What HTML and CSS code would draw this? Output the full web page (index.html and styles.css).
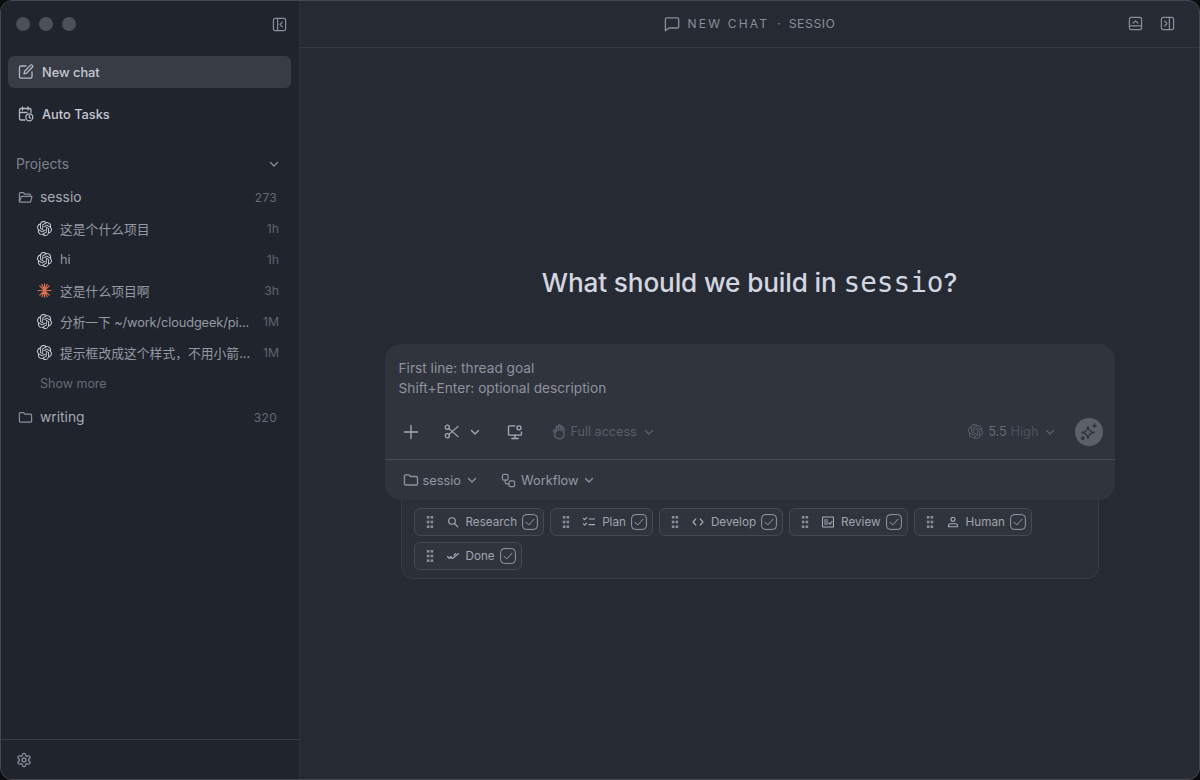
FILE: index.html
```html
<!DOCTYPE html>
<html lang="en">
<head>
<meta charset="utf-8">
<title>New chat · sessio</title>
<link rel="stylesheet" href="styles.css">
</head>
<body>
<svg class="defs" width="0" height="0" aria-hidden="true">
  <symbol id="oai" viewBox="0 0 24 24"><path fill="currentColor" stroke="none" d="M22.2819 9.8211a5.9847 5.9847 0 0 0-.5157-4.9108 6.0462 6.0462 0 0 0-6.5098-2.9A6.0651 6.0651 0 0 0 4.9807 4.1818a5.9847 5.9847 0 0 0-3.9977 2.9 6.0462 6.0462 0 0 0 .7427 7.0966 5.98 5.98 0 0 0 .511 4.9107 6.051 6.051 0 0 0 6.5146 2.9001A5.9847 5.9847 0 0 0 13.2599 24a6.0557 6.0557 0 0 0 5.7718-4.2058 5.9894 5.9894 0 0 0 3.9977-2.9001 6.0557 6.0557 0 0 0-.7475-7.0729zm-9.022 12.6081a4.4755 4.4755 0 0 1-2.8764-1.0408l.1419-.0804 4.7783-2.7582a.7948.7948 0 0 0 .3927-.6813v-6.7369l2.02 1.1686a.071.071 0 0 1 .038.052v5.5826a4.504 4.504 0 0 1-4.4945 4.4944zm-9.6607-4.1254a4.4708 4.4708 0 0 1-.5346-3.0137l.142.0852 4.783 2.7582a.7712.7712 0 0 0 .7806 0l5.8428-3.3685v2.3324a.0804.0804 0 0 1-.0332.0615L9.74 19.9502a4.4992 4.4992 0 0 1-6.1408-1.6464zM2.3408 7.8956a4.485 4.485 0 0 1 2.3655-1.9728V11.6a.7664.7664 0 0 0 .3879.6765l5.8144 3.3543-2.0201 1.1685a.0757.0757 0 0 1-.071 0l-4.8303-2.7865A4.504 4.504 0 0 1 2.3408 7.872zm16.5963 3.8558L13.1038 8.364 15.1192 7.2a.0757.0757 0 0 1 .071 0l4.8303 2.7913a4.4944 4.4944 0 0 1-.6765 8.1042v-5.6772a.79.79 0 0 0-.407-.667zm2.0107-3.0231l-.142-.0852-4.7735-2.7818a.7759.7759 0 0 0-.7854 0L9.409 9.2297V6.8974a.0662.0662 0 0 1 .0284-.0615l4.8303-2.7866a4.4992 4.4992 0 0 1 6.6802 4.66zM8.3065 12.863l-2.02-1.1638a.0804.0804 0 0 1-.038-.0567V6.0742a4.4992 4.4992 0 0 1 7.3757-3.4537l-.142.0805L8.704 5.459a.7948.7948 0 0 0-.3927.6813zm1.0976-2.3654l2.602-1.4998 2.6069 1.4998v2.9994l-2.5974 1.4997-2.6067-1.4997Z"/></symbol>
  <symbol id="chev" viewBox="0 0 10 10"><path d="M1.5 3.5 5 7l3.5-3.5"/></symbol>
  <symbol id="grip" viewBox="0 0 8 14"><g class="dots"><rect x=".8" y="1" width="2.6" height="2.6"/><rect x="4.6" y="1" width="2.6" height="2.6"/><rect x=".8" y="5.700" width="2.6" height="2.6"/><rect x="4.6" y="5.700" width="2.6" height="2.6"/><rect x=".8" y="10.400" width="2.6" height="2.6"/><rect x="4.6" y="10.400" width="2.6" height="2.6"/></g></symbol>
  <symbol id="box" viewBox="0 0 16 16"><rect x=".6" y=".6" width="14.8" height="14.8" rx="3.6"/><path d="m4 8.2 2.8 2.8L12 5.2"/></symbol>
  <symbol id="folder" viewBox="0 0 16 16"><path d="M1.5 12V3.8c0-.6.5-1 1-1h3.4l1.7 1.7h5.9c.6 0 1 .5 1 1V12c0 .6-.5 1-1 1H2.5c-.6 0-1-.5-1-1Z"/></symbol>
</svg>

<div class="window">
  <aside class="sidebar">
    <div class="titlebar">
      <div class="lights"><span class="light"></span><span class="light"></span><span class="light"></span></div>
      <svg class="ic ic-15 muted" viewBox="0 0 16 16"><rect x="1.5" y="1.5" width="13" height="13" rx="1.8"/><path d="M6 1.5v13"/><path d="M11 5.5 8.6 8l2.4 2.5"/></svg>
    </div>
    <nav class="nav">
      <a class="nav-item active">
        <svg class="ic ic-16" viewBox="0 0 16 16"><path d="M8 2H3a1.5 1.5 0 0 0-1.5 1.5v9.200A1.500 1.500 0 0 0 3 14.200h9.500a1.500 1.500 0 0 0 1.500-1.500V8"/><path d="M12.300 1.400a1.300 1.300 0 0 1 2 1.900L8.500 9.200 6 9.800l.6-2.500Z"/></svg>
        <span>New chat</span>
      </a>
      <a class="nav-item">
        <svg class="ic ic-16" viewBox="0 0 16 16"><path d="M7 14H3a1.500 1.500 0 0 1-1.500-1.500V4A1.500 1.500 0 0 1 3 2.500h8.500A1.500 1.500 0 0 1 13 4v2.500"/><path d="M4.500 1v3M10 1v3M1.500 6.500H9"/><circle cx="11.300" cy="11.300" r="3.500"/><path d="M11.300 9.500v1.900l1.200.8"/></svg>
        <span>Auto Tasks</span>
      </a>
    </nav>
    <div class="section-head">
      <span>Projects</span>
      <svg class="ic ic-10 chev-dim"><use href="#chev"/></svg>
    </div>
    <div class="project">
      <svg class="ic ic-15 muted" viewBox="0 0 16 16"><path d="M1.500 12.500V3.800c0-.6.5-1 1-1h3.300l1.600 1.700h5c.6 0 1 .5 1 1v1.200"/><path d="M1.500 12.500 3.200 7.600c.1-.5.5-.9 1-.9h9.600c.7 0 1.100.6.900 1.200l-1.200 4.300c-.1.500-.5.800-1 .8H2.500c-.5 0-1-.5-1-.5Z"/></svg>
      <span class="project-name">sessio</span>
      <span class="count">273</span>
    </div>
    <ul class="threads">
      <li class="thread"><svg class="logo ic-15"><use href="#oai"/></svg><span class="thread-title">这是个什么项目</span><span class="age">1h</span></li>
      <li class="thread"><svg class="logo ic-15"><use href="#oai"/></svg><span class="thread-title">hi</span><span class="age">1h</span></li>
      <li class="thread"><svg class="claude ic-15" viewBox="0 0 16 16"><path d="M8 1v14M1 8h14M3 3l10 10M13 3 3 13M5.300 1.500l5.400 13M10.700 1.500l-5.400 13"/></svg><span class="thread-title">这是什么项目啊</span><span class="age">3h</span></li>
      <li class="thread"><svg class="logo ic-15"><use href="#oai"/></svg><span class="thread-title thread-latin">分析一下 ~/work/cloudgeek/pi...</span><span class="age">1M</span></li>
      <li class="thread"><svg class="logo ic-15"><use href="#oai"/></svg><span class="thread-title">提示框改成这个样式，不用小箭...</span><span class="age">1M</span></li>
    </ul>
    <div class="show-more">Show more</div>
    <div class="project project-2">
      <svg class="ic ic-15 muted"><use href="#folder"/></svg>
      <span class="project-name">writing</span>
      <span class="count">320</span>
    </div>
    <footer class="side-foot">
      <svg class="ic ic-16 muted gear" viewBox="0 0 24 24"><path d="M12.22 2h-.44a2 2 0 0 0-2 2v.18a2 2 0 0 1-1 1.73l-.43.25a2 2 0 0 1-2 0l-.15-.08a2 2 0 0 0-2.73.73l-.22.38a2 2 0 0 0 .73 2.73l.15.1a2 2 0 0 1 1 1.72v.51a2 2 0 0 1-1 1.74l-.15.09a2 2 0 0 0-.73 2.73l.22.38a2 2 0 0 0 2.73.73l.15-.08a2 2 0 0 1 2 0l.43.25a2 2 0 0 1 1 1.73V20a2 2 0 0 0 2 2h.44a2 2 0 0 0 2-2v-.18a2 2 0 0 1 1-1.73l.43-.25a2 2 0 0 1 2 0l.15.08a2 2 0 0 0 2.73-.73l.22-.39a2 2 0 0 0-.73-2.73l-.15-.08a2 2 0 0 1-1-1.74v-.5a2 2 0 0 1 1-1.74l.15-.09a2 2 0 0 0 .73-2.73l-.22-.38a2 2 0 0 0-2.73-.73l-.15.08a2 2 0 0 1-2 0l-.43-.25a2 2 0 0 1-1-1.73V4a2 2 0 0 0-2-2z"/><circle cx="12" cy="12" r="3"/></svg>
    </footer>
  </aside>

  <main class="main">
    <header class="topbar">
      <div class="crumb">
        <svg class="ic ic-16 crumb-ic" viewBox="0 0 16 16"><path d="M2.500 1.800h11a1.200 1.200 0 0 1 1.200 1.200v7.800a1.200 1.200 0 0 1-1.200 1.200H5L1.400 14.800V3a1.200 1.200 0 0 1 1.100-1.200Z"/></svg>
        <span class="crumb-a">NEW CHAT</span><span class="crumb-dot">·</span><span class="crumb-b">SESSIO</span>
      </div>
      <div class="top-actions">
        <svg class="ic ic-15 muted" viewBox="0 0 16 16"><rect x="1.500" y="1.500" width="13" height="13" rx="1.800"/><path d="M1.500 10.500h13"/><path d="M5.500 7.500 8 5.200l2.500 2.300"/></svg>
        <svg class="ic ic-15 muted" viewBox="0 0 16 16"><rect x="1.500" y="1.500" width="13" height="13" rx="1.800"/><path d="M10 1.500v13"/><path d="M5 5.500 7.400 8 5 10.500"/></svg>
      </div>
    </header>

    <section class="stage">
      <h1 class="headline">What should we build in <code class="mono">sessio</code>?</h1>
      <div class="composer">
        <div class="prompt">First line: thread goal<br>Shift+Enter: optional description</div>
        <div class="tools">
          <svg class="ic ic-16 tool-ic plus" viewBox="0 0 16 16"><path d="M8 1.500v13M1.500 8h13"/></svg>
          <svg class="ic ic-15 tool-ic scissors" viewBox="0 0 16 16"><circle cx="3.500" cy="3.500" r="2.200"/><circle cx="3.500" cy="12.500" r="2.200"/><path d="M5.200 4.900 15 13.500M5.200 11.100 15 2.500"/></svg>
          <svg class="ic ic-10 tool-ic scissors-chev"><use href="#chev"/></svg>
          <svg class="ic ic-16 tool-ic monitor" viewBox="0 0 16 16"><path d="M8 1.800H2.500a1 1 0 0 0-1 1v7.400a1 1 0 0 0 1 1h11a1 1 0 0 0 1-1V8"/><path d="M8 11.200v3M4.800 14.500h6.400"/><circle cx="12" cy="3.800" r="2" class="solid"/></svg>
          <svg class="ic dim hand" viewBox="0 0 16 16"><path d="M4 9.500 2.600 8c-.8-.9.5-2 1.400-1.100L5 8V4c0-1.200 1.800-1.200 1.800 0v3V2.800c0-1.200 1.800-1.200 1.800 0V7V3.500c0-1.200 1.800-1.200 1.800 0v4V5c0-1.200 1.800-1.200 1.800 0v5.500c0 2.800-2 4.300-4.500 4.300-2.300 0-3.400-1-4.400-2.800Z"/></svg>
          <span class="dim-label access">Full access</span>
          <svg class="ic ic-10 dim access-chev"><use href="#chev"/></svg>
          <span class="spacer"></span>
          <svg class="logo ic-15 dim-logo"><use href="#oai"/></svg>
          <span class="dim-label model"><span class="model-a">5.5</span> <span class="model-b">High</span></span>
          <svg class="ic ic-10 dim model-chev"><use href="#chev"/></svg>
          <span class="send">
            <svg class="ic send-ic" viewBox="0 0 18 18"><path d="M8 3.500c.6 3.500 2.500 5.400 6 6-3.500.6-5.400 2.500-6 6-.6-3.500-2.500-5.400-6-6 3.500-.6 5.400-2.500 6-6Z"/><path d="M14.500 1v3.400M12.800 2.700h3.400"/><circle cx="2.800" cy="15.200" r="1.200"/></svg>
          </span>
        </div>
        <div class="context">
          <svg class="ic ic-16 ctx-ic"><use href="#folder"/></svg>
          <span class="ctx-label">sessio</span>
          <svg class="ic ic-10 ctx-ic ctx-chev"><use href="#chev"/></svg>
          <svg class="ic ic-15 ctx-ic flow-ic" viewBox="0 0 16 16"><rect x="1.500" y="1.500" width="6" height="6" rx="1.500"/><rect x="8.500" y="8.500" width="6" height="6" rx="1.500"/><path d="M4.500 7.500v2.500c0 1 .7 1.500 1.500 1.500h2.500"/></svg>
          <span class="ctx-label">Workflow</span>
          <svg class="ic ic-10 ctx-ic ctx-chev"><use href="#chev"/></svg>
        </div>
      </div>
      <div class="workflow">
        <div class="chip"><svg class="grip"><use href="#grip"/></svg><svg class="ic chip-ic" viewBox="0 0 12 12"><circle cx="5" cy="5" r="3.300"/><path d="m7.500 7.500 3.300 3.300"/></svg><span class="chip-label">Research</span><svg class="ic chip-box"><use href="#box"/></svg></div>
        <div class="chip"><svg class="grip"><use href="#grip"/></svg><svg class="ic chip-ic" viewBox="0 0 12 12"><path d="m.5 2.500 1.200 1.200L3.600 1.600M.5 8l1.200 1.200 1.900-2.100M6 3h5.800M6 8.600h5.800"/></svg><span class="chip-label">Plan</span><svg class="ic chip-box"><use href="#box"/></svg></div>
        <div class="chip"><svg class="grip"><use href="#grip"/></svg><svg class="ic chip-ic" viewBox="0 0 12 12"><path d="M3.800 3 1 6l2.800 3M8.200 3 11 6 8.200 9"/></svg><span class="chip-label">Develop</span><svg class="ic chip-box"><use href="#box"/></svg></div>
        <div class="chip"><svg class="grip"><use href="#grip"/></svg><svg class="ic chip-ic" viewBox="0 0 12 12"><rect x=".5" y="1" width="11" height="10" rx=".8"/><path d="M2.500 4h3M2.500 6h3M2.500 8h3M6.800 7l1.200 1.200 2-2.700"/></svg><span class="chip-label">Review</span><svg class="ic chip-box"><use href="#box"/></svg></div>
        <div class="chip"><svg class="grip"><use href="#grip"/></svg><svg class="ic chip-ic" viewBox="0 0 12 12"><circle cx="6" cy="3.300" r="2"/><path d="M1.500 10.800V9.800c0-1.200 1-2 2-2h5c1 0 2 .8 2 2v1Z"/></svg><span class="chip-label">Human</span><svg class="ic chip-box"><use href="#box"/></svg></div>
        <div class="chip"><svg class="grip"><use href="#grip"/></svg><svg class="ic chip-ic" viewBox="0 0 12 12"><path d="M.5 6.500 2.500 8.500 4 7M3.500 6.500l2 2L11.500 3.500M7 5l1.500-1.300"/></svg><span class="chip-label">Done</span><svg class="ic chip-box"><use href="#box"/></svg></div>
      </div>
    </section>
  </main>
</div>
</body>
</html>
```

FILE: styles.css
```css
* { box-sizing: border-box; }

html, body {
  margin: 0;
  height: 100%;
  background: #0c0d10;
}

body {
  font-family: Inter, "Noto Sans CJK SC", "Liberation Sans", sans-serif;
  overflow: hidden;
}

.defs { position: absolute; }

.window {
  width: 1200px;
  height: 780px;
  display: flex;
  border: 1px solid #44474e;
  border-radius: 12px;
  overflow: hidden;
  background: #262a33;
}

.ic {
  fill: none;
  stroke: currentColor;
  stroke-width: 1.3;
  stroke-linecap: round;
  stroke-linejoin: round;
  flex: none;
}

.ic-10 { width: 10px; height: 10px; }
.ic-15 { width: 15px; height: 15px; flex: none; }
.ic-16 { width: 16px; height: 16px; }
.muted { color: #8a8e99; }

/* Sidebar */
.sidebar {
  width: 299px;
  flex: none;
  display: flex;
  flex-direction: column;
  background: #20242c;
  border-right: 1px solid #2e323b;
}

.titlebar {
  height: 46px;
  padding: 0 12px 0 15px;
  display: flex;
  align-items: center;
  justify-content: space-between;
}

.lights { display: flex; gap: 9px; }

.light {
  width: 14px;
  height: 14px;
  border-radius: 50%;
  background: #4d5058;
}

.nav {
  margin-top: 9px;
  padding: 0 8px 0 7px;
  display: flex;
  flex-direction: column;
  gap: 10px;
}

.nav-item {
  height: 32px;
  padding: 0 10px;
  display: flex;
  align-items: center;
  gap: 8px;
  border-radius: 6px;
  font-size: 12.800px;
  font-weight: 500;
  color: #c6c9d3;
}

.nav-item .ic { color: #b5b8c2; }
.nav-item.active { background: #383c45; }

.section-head {
  margin-top: 21px;
  height: 26px;
  padding: 0 20px 0 15px;
  display: flex;
  align-items: center;
  justify-content: space-between;
  font-size: 13.800px;
  color: #7e838e;
}

.chev-dim { color: #8a8e99; }

.project {
  margin-top: 7px;
  height: 26px;
  padding: 0 22px 0 17px;
  display: flex;
  align-items: center;
  gap: 7px;
}

.project-2 { margin-top: 6px; }

.project-name {
  flex: 1;
  font-size: 13.800px;
  color: #a8acb7;
}

.count {
  font-size: 12px;
  letter-spacing: .3px;
  color: #666b76;
}

.threads {
  list-style: none;
  margin: 3px 0 0;
  padding: 0;
}

.thread {
  height: 31px;
  padding: 0 20px 0 36px;
  display: flex;
  align-items: center;
  gap: 8px;
}

.logo { color: #d0d3dc; flex: none; }

.claude {
  flex: none;
  fill: none;
  stroke: #d9704e;
  stroke-width: 1.300;
  stroke-linecap: round;
}

.thread-title {
  flex: 1;
  min-width: 0;
  white-space: nowrap;
  overflow: hidden;
  font-size: 12.800px;
  color: #9599a4;
}

.thread-latin { letter-spacing: -.12px; }

.age {
  font-size: 12.300px;
  color: #5f646f;
}

.show-more {
  height: 30px;
  padding-left: 39px;
  display: flex;
  align-items: center;
  font-size: 12.500px;
  color: #666b76;
}

.side-foot {
  margin-top: auto;
  height: 40px;
  padding: 1px 0 0 15px;
  display: flex;
  align-items: center;
  border-top: 1px solid #363a43;
}

.gear { stroke-width: 1.900; }

/* Main */
.main {
  flex: 1;
  min-width: 0;
  display: flex;
  flex-direction: column;
}

.topbar {
  height: 47px;
  flex: none;
  padding-bottom: 1px;
  display: flex;
  align-items: center;
  justify-content: center;
  position: relative;
  border-bottom: 1px solid #353943;
}

.crumb {
  display: flex;
  align-items: center;
  color: #8a8e99;
}

.crumb-ic { margin-right: 8px; }
.crumb-a { font-size: 12px; letter-spacing: 2.200px; }
.crumb-dot { margin: 0 8px; font-size: 12px; }
.crumb-b { font-size: 12.300px; letter-spacing: .5px; }

.top-actions {
  position: absolute;
  right: 24px;
  top: 15px;
  display: flex;
  gap: 17px;
}

.stage {
  flex: 1;
  display: flex;
  flex-direction: column;
  align-items: center;
  padding-top: 217px;
}

.headline {
  margin: 0 0 43px;
  font-size: 26.200px;
  line-height: 36px;
  font-weight: 500;
  letter-spacing: -.15px;
  color: #d3d6e0;
}

.mono {
  font-family: "DejaVu Sans Mono", monospace;
  font-size: 27.700px;
  font-weight: 400;
  letter-spacing: 0;
}

.composer {
  position: relative;
  z-index: 1;
  width: 730px;
  height: 156px;
  display: flex;
  flex-direction: column;
  border-radius: 16px;
  background: #30343d;
}

.prompt {
  padding: 14px 14px 0;
  height: 66px;
  font-size: 13.700px;
  line-height: 20px;
  color: #8e929d;
}

.tools {
  height: 50px;
  padding: 0 12px 6px 18px;
  display: flex;
  align-items: center;
  border-bottom: 1px solid #464a53;
}

.tool-ic { color: #a8acb7; }
.scissors { margin-left: 25px; }
.scissors-chev { margin-left: 11px; }
.monitor { margin-left: 27px; }

.hand {
  width: 17px;
  height: 17px;
  margin-left: 28px;
  margin-right: 3px;
}

.dim { color: #5b5f69; }
.dim-logo { color: #5b5f69; margin-left: 1px; }

.dim-label {
  font-size: 12.800px;
  color: #5b5f69;
}

.access { font-size: 12.600px; }
.access-chev { margin-left: 7px; }
.spacer { flex: 1; }
.model { margin-left: 5px; }
.model-a { color: #666a75; }
.model-b { color: #4e525c; }
.model-chev { margin-left: 6px; margin-right: 20px; }

.send {
  width: 28px;
  height: 28px;
  display: flex;
  align-items: center;
  justify-content: center;
  border-radius: 50%;
  background: #5c6069;
}

.send-ic {
  width: 18px;
  height: 18px;
  color: #2f333b;
  stroke-width: 1.400;
}

.context {
  flex: 1;
  padding: 0 0 0 18px;
  display: flex;
  align-items: center;
}

.ctx-ic { color: #8e929d; }
.ctx-label { margin-left: 4px; font-size: 12.800px; color: #9599a4; }
.ctx-chev { margin-left: 6px; }
.flow-ic { margin-left: 24px; margin-right: 1px; }

.workflow {
  width: 698px;
  margin-top: -11px;
  padding: 18px 12px 8px;
  display: flex;
  flex-wrap: wrap;
  gap: 6px;
  border: 1px solid #393d46;
  border-radius: 0 0 12px 12px;
  background: #2b2f38;
}

.chip {
  height: 28px;
  padding: 0 5px 0 11px;
  display: flex;
  align-items: center;
  border: 1px solid #454952;
  border-radius: 6px;
  background: #30343d;
}

.grip { width: 8px; height: 14px; flex: none; }
.dots { fill: #8a8e99; }

.chip-ic {
  width: 12px;
  height: 12px;
  margin-left: 13px;
  color: #a8acb7;
  stroke-width: 1.100;
}

.chip-label {
  margin-left: 7px;
  font-size: 11.700px;
  color: #a0a4af;
}

.chip-box {
  width: 16px;
  height: 16px;
  margin-left: 5px;
  color: #9599a4;
  stroke-width: 1;
}
```
